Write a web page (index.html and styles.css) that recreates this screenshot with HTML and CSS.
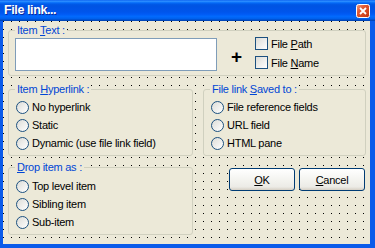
FILE: index.html
```html
<!DOCTYPE html>
<html lang="en">
<head>
    <meta charset="UTF-8">
    <title>File link...</title>
    <link rel="stylesheet" href="styles.css">
</head>
<body>
    <div class="window">
        <div class="titlebar">
            <span class="title">File link...</span>
            <svg class="close" width="14" height="14" viewBox="0 0 14 14">
                <defs>
                    <linearGradient id="closeFill" x1="0" y1="0" x2="1" y2="1">
                        <stop offset="0" stop-color="#F2A48C"/>
                        <stop offset="0.35" stop-color="#E35A33"/>
                        <stop offset="1" stop-color="#C2330D"/>
                    </linearGradient>
                </defs>
                <rect x="0.5" y="0.5" width="13" height="13" rx="2" fill="url(#closeFill)" stroke="#fff"/>
                <path d="M4 4L10 10M10 4L4 10" stroke="#fff" stroke-width="1.8"/>
            </svg>
        </div>
        <div class="frame">
            <div class="client">
                <fieldset class="group wide">
                    <legend>Item <u>T</u>ext :</legend>
                    <div class="text-row">
                        <div class="textbox"></div>
                        <span class="plus">+</span>
                        <div class="checks">
                            <label class="check"><span class="box"></span><span>File <u>P</u>ath</span></label>
                            <label class="check"><span class="box"></span><span>File <u>N</u>ame</span></label>
                        </div>
                    </div>
                </fieldset>

                <fieldset class="group mid">
                    <legend>Item <u>H</u>yperlink :</legend>
                    <label class="option"><span class="radio"></span><span>No hyperlink</span></label>
                    <label class="option"><span class="radio"></span><span>Static</span></label>
                    <label class="option"><span class="radio"></span><span>Dynamic (use file link field)</span></label>
                </fieldset>

                <fieldset class="group mid">
                    <legend>File link <u>S</u>aved to :</legend>
                    <label class="option"><span class="radio"></span><span>File reference fields</span></label>
                    <label class="option"><span class="radio"></span><span>URL field</span></label>
                    <label class="option"><span class="radio"></span><span>HTML pane</span></label>
                </fieldset>

                <fieldset class="group low">
                    <legend><u>D</u>rop item as :</legend>
                    <label class="option"><span class="radio"></span><span>Top level item</span></label>
                    <label class="option"><span class="radio"></span><span>Sibling item</span></label>
                    <label class="option"><span class="radio"></span><span>Sub-item</span></label>
                </fieldset>

                <div class="buttons low">
                    <button><u>O</u>K</button>
                    <button><u>C</u>ancel</button>
                </div>
            </div>
        </div>
    </div>
</body>
</html>
```

FILE: styles.css
```css
body {
    margin: 0;
    font-family: "Liberation Sans", Arial, sans-serif;
    font-size: 11px;
    letter-spacing: -0.25px;
}
.window {
    width: 375px;
    height: 248px;
    display: flex;
    flex-direction: column;
}
.titlebar {
    height: 21px;
    flex: none;
    display: flex;
    justify-content: space-between;
    align-items: flex-start;
    padding: 0 5px 0 4px;
    background: linear-gradient(to bottom, #0058EE 0%, #3593FF 5%, #1A83FF 9%, #0469F6 14%, #0057E5 22%, #0054E3 30%, #0055EB 56%, #005BF5 68%, #026AFE 78%, #0062EF 88%, #0050D0 94%, #0040AB 100%);
}
.title {
    color: #fff;
    font-weight: bold;
    font-size: 12.5px;
    line-height: 21px;
    letter-spacing: -0.4px;
    text-shadow: 1px 1px 0 #0A2A9C;
}
.close {
    margin-top: 4px;
}
.frame {
    flex: 1;
    display: flex;
    border-left: 3px solid #0A5BEA;
    border-right: 5px solid #0A5BEA;
    border-bottom: 4px solid #0A5BEA;
}
.client {
    flex: 1;
    padding: 3px 4px 0 5px;
    background-color: #ECE9D8;
    background-image: conic-gradient(from 270deg at 1px 1px, #000 90deg, transparent 0);
    background-size: 8px 8px;
    display: grid;
    grid-template-columns: 185px 163px;
    column-gap: 10px;
    align-content: start;
    align-items: start;
}
.group {
    margin: 0;
    min-width: 0;
    border: 1px solid #D0D0BF;
    border-radius: 3px;
    padding: 2px 6px 3px;
    background: #ECE9D8;
}
.group legend {
    padding: 0 2px;
    line-height: 13px;
    color: #0046D5;
    background: #ECE9D8;
}
.wide {
    grid-column: 1 / -1;
    padding: 1px 6px 4px;
}
.mid {
    margin-top: 7px;
}
.low {
    margin-top: 5px;
}
.group.low {
    padding-top: 3px;
}
.text-row {
    display: flex;
    align-items: flex-start;
}
.textbox {
    width: 202px;
    height: 33px;
    box-sizing: border-box;
    border: 1px solid #7F9DB9;
    background: #fff;
}
.plus {
    width: 11px;
    margin: 9px 0 0 14px;
    font-size: 19px;
    font-weight: bold;
    line-height: 19px;
    letter-spacing: 0;
}
.checks {
    display: flex;
    flex-direction: column;
    gap: 6px;
    margin: -1px 0 0 13px;
}
.check,
.option {
    display: flex;
    align-items: center;
    gap: 3px;
}
.check {
    height: 13px;
}
.option {
    height: 18px;
}
.box,
.radio {
    width: 13px;
    height: 13px;
    box-sizing: border-box;
    border: 1px solid #1C5180;
    background: linear-gradient(135deg, #DCDCD7, #FFFFFF);
    flex: none;
}
.radio {
    border-radius: 50%;
    margin-left: 1px;
}
.buttons {
    display: flex;
    justify-content: flex-end;
    gap: 4px;
    padding: 7px 1px 0 0;
}
.buttons button {
    width: 66px;
    height: 23px;
    padding: 0;
    border: 1px solid #003C74;
    border-radius: 3px;
    background: linear-gradient(to bottom, #FFFFFF 0%, #F4F4F0 50%, #ECEBE6 85%, #D6D0C5 100%);
    font-family: inherit;
    font-size: 11px;
    letter-spacing: -0.25px;
    color: #000;
}
```
